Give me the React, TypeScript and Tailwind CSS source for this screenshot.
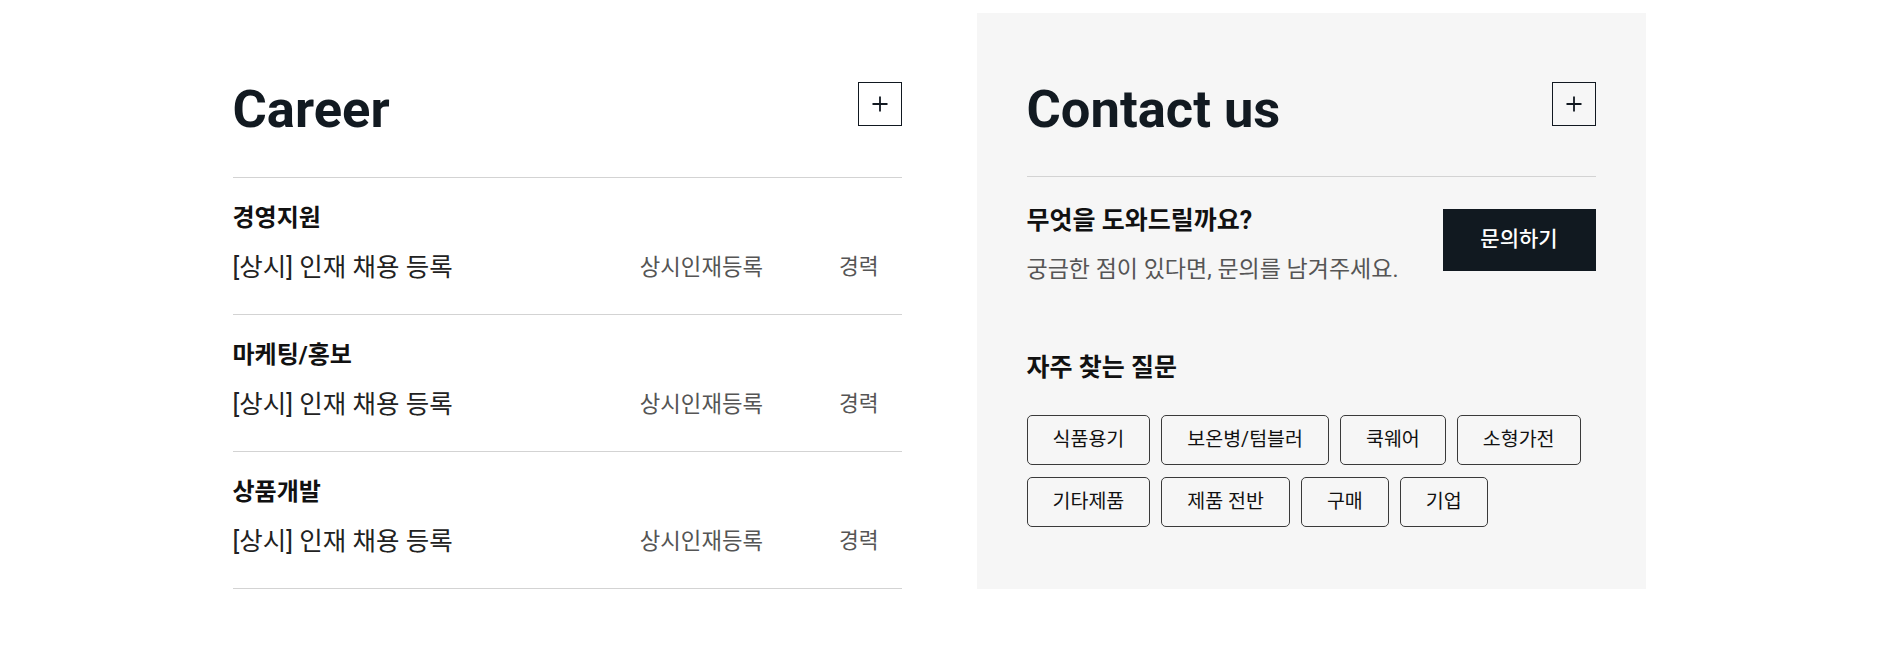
import React from "react";

const jobs = [
  { category: "경영지원", title: "[상시] 인재 채용 등록", tag: "상시인재등록", type: "경력" },
  { category: "마케팅/홍보", title: "[상시] 인재 채용 등록", tag: "상시인재등록", type: "경력" },
  { category: "상품개발", title: "[상시] 인재 채용 등록", tag: "상시인재등록", type: "경력" },
];

const chips = ["식품용기", "보온병/텀블러", "쿡웨어", "소형가전", "기타제품", "제품 전반", "구매", "기업"];

function PlusBox() {
  return (
    <button className="mt-[3px] flex h-[44px] w-[44px] items-center justify-center border border-[#111820] bg-transparent">
      <svg width="16" height="16" viewBox="0 0 16 16" fill="none">
        <path d="M8 0.5V15.5M0.5 8H15.5" stroke="#111820" strokeWidth="1.8" />
      </svg>
    </button>
  );
}

export default function App() {
  return (
    <div className="min-h-[656px] w-full bg-white font-['Roboto','Noto_Sans_CJK_KR',sans-serif] text-[#121a21]">
      <div className="mx-auto flex w-[1413px] items-start gap-[75px] pt-[13px]">
        {/* Career */}
        <section className="w-[669px] pt-[66px]">
          <div className="flex items-start justify-between pb-[38px]">
            <h2 className="text-[52.5px] font-bold leading-[60px]">Career</h2>
            <PlusBox />
          </div>
          <ul className="border-t border-[#d3d3d3]">
            {jobs.map((j) => (
              <li key={j.category} className="border-b border-[#d3d3d3] pt-[24px] pb-[30px]">
                <div className="text-[24px] font-bold leading-[32px] text-[#111]">{j.category}</div>
                <div className="mt-[16px] flex items-center">
                  <div className="flex-1 text-[25.5px] leading-[34px] text-[#222]">{j.title}</div>
                  <div className="text-[22.3px] leading-[34px] text-[#555]">{j.tag}</div>
                  <div className="ml-[76px] mr-[23px] text-[21.5px] leading-[34px] text-[#555]">{j.type}</div>
                </div>
              </li>
            ))}
          </ul>
        </section>

        {/* Contact */}
        <section className="h-[576px] w-[669px] bg-[#f6f6f6] px-[50px] pt-[66px]">
          <div className="flex items-start justify-between border-b border-[#d3d3d3] pb-[37px]">
            <h2 className="text-[52.5px] font-bold leading-[60px]">Contact us</h2>
            <PlusBox />
          </div>
          <div className="flex items-start justify-between pt-[28px]">
            <div>
              <div className="text-[25px] font-bold leading-[32px] text-[#111]">무엇을 도와드릴까요?</div>
              <div className="mt-[18px] text-[23px] leading-[30px] text-[#555]">
                궁금한 점이 있다면, 문의를 남겨주세요.
              </div>
            </div>
            <button className="mt-[4px] flex h-[62px] w-[153px] items-center justify-center bg-[#111920] text-[21px] font-medium text-white">
              문의하기
            </button>
          </div>
          <div className="mt-[67px] text-[25px] font-bold leading-[32px] text-[#111]">자주 찾는 질문</div>
          <div className="mt-[31px] flex flex-wrap gap-x-[11px] gap-y-[12px]">
            {chips.map((c) => (
              <button
                key={c}
                className="flex h-[50px] items-center rounded-[5px] border border-[#3a3a3a] px-[25px] text-[19.5px] text-[#111]"
              >
                {c}
              </button>
            ))}
          </div>
        </section>
      </div>
    </div>
  );
}
